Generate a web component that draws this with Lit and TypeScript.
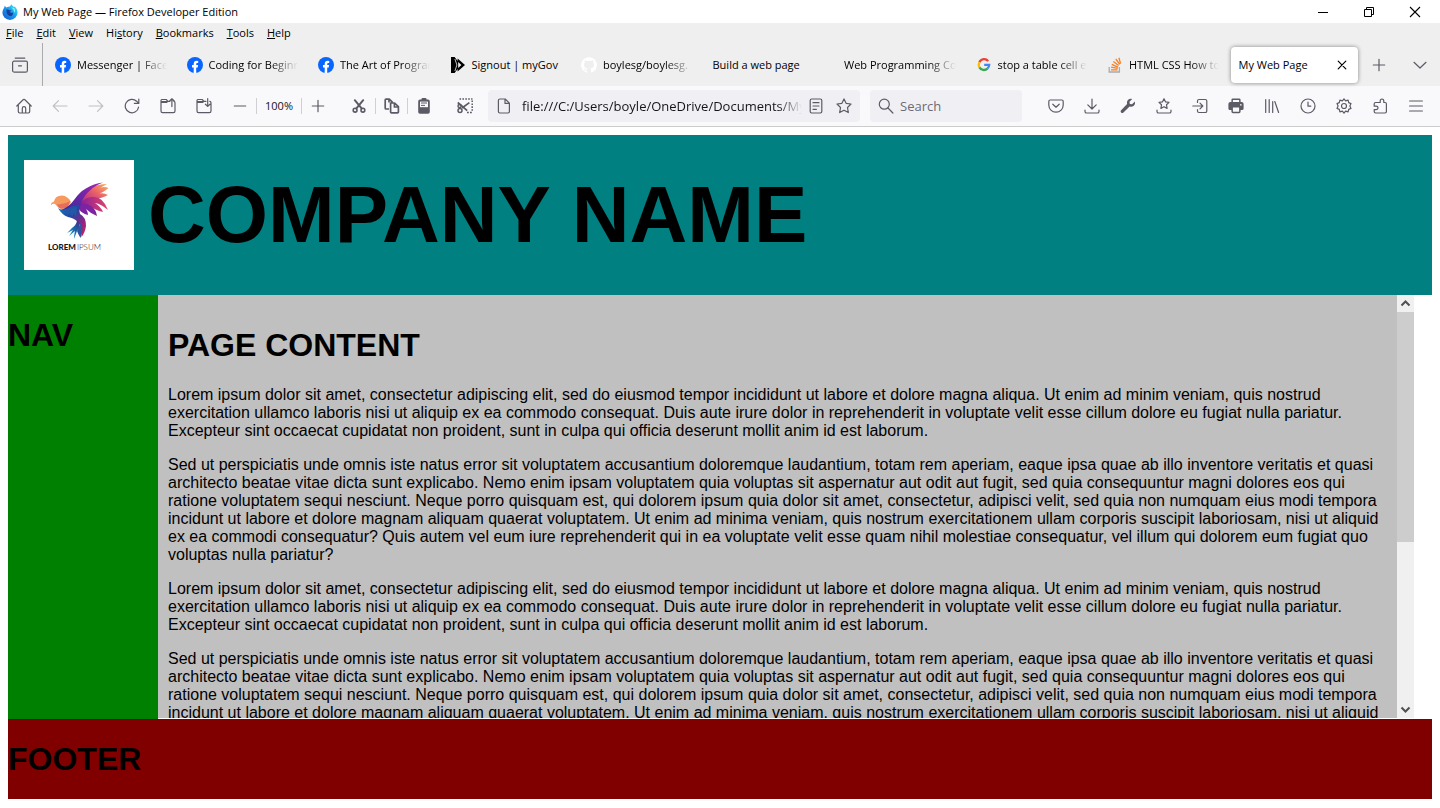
import { LitElement, html, css, svg, TemplateResult } from "lit";
import { customElement, state } from "lit/decorators.js";
import { classMap } from "lit/directives/class-map.js";

type Glyph = ReturnType<typeof svg>;

const stroked = (d: string, extra?: Glyph) =>
  html`<svg class="icon" viewBox="0 0 16 16" fill="none" stroke="currentColor" stroke-width="1.2" stroke-linecap="round" stroke-linejoin="round" aria-hidden="true"><path d=${d}></path>${extra}</svg>`;

const SPIKES =
  "M8 .9L9.6 2.9L12.1 2.1L12.7 4.6L15 5.6L13.9 8L15 10.4L12.7 11.4L12.1 13.9L9.6 13.1L8 15.1L6.4 13.1L3.9 13.9L3.3 11.4L1 10.4L2.1 8L1 5.6L3.3 4.6L3.9 2.1L6.4 2.9z";

const icons: Record<string, TemplateResult> = {
  view: stroked("M3.2 1.1H12.8M2 4.2H14A1.4 1.4 0 0 1 15.4 5.6V13.4A1.8 1.8 0 0 1 13.6 15.2H2.4A1.8 1.8 0 0 1 .6 13.4V5.6A1.4 1.4 0 0 1 2 4.2zM6.5 8.8H9.5"),
  home: stroked("M.8 8L7.4 1.5Q8 1 8.6 1.5L15.2 8M2.3 7V13.6Q2.3 15 3.7 15H12.3Q13.7 15 13.7 13.6V7M6.3 15V10.2Q6.3 8.6 8 8.6Q9.7 8.6 9.7 10.2V15"),
  back: stroked("M15 8H1.2M6.5 2.7L1.2 8L6.5 13.3"),
  forward: stroked("M1 8H14.8M9.5 2.7L14.8 8L9.5 13.3"),
  reload: stroked("M14.6 9A6.7 6.7 0 1 1 12.6 3.2L14.6 5.2M14.8 1V5.4H10.4"),
  open: stroked("M10 3.3H8L6.2 1.5H1.8Q1 1.5 1 2.5V13Q1 14.6 2.6 14.6H13.4Q15 14.6 15 13V5Q15 3.3 13.8 3.3M1 4.4H7M1 3.6H7M11.9 8.6V.8M9.6 3L11.9 .8L14.2 3"),
  save: stroked("M10 3.3H8L6.2 1.5H1.8Q1 1.5 1 2.5V13Q1 14.6 2.6 14.6H13.4Q15 14.6 15 13V5Q15 3.3 13.8 3.3M1 4.4H7M1 3.6H7M11.7 .6V8.4M9.4 6.2L11.7 8.4L14 6.2"),
  minus: stroked("M2.3 8H13.7"),
  plus: stroked("M2.3 8H13.7M8 2.3V13.7"),
  cut: html`<svg class="icon" viewBox="0 0 16 16" fill="none" stroke="currentColor" stroke-width="1.6" stroke-linecap="round" aria-hidden="true"><circle cx="4.1" cy="12.2" r="1.9"></circle><circle cx="11.9" cy="12.2" r="1.9"></circle><path d="M5.2 10.6L12.2 2.2M10.8 10.6L3.8 2.2" stroke-width="2"></path></svg>`,
  copy: html`<svg class="icon" viewBox="0 0 16 16" fill="none" stroke="currentColor" stroke-width="1.7" stroke-linejoin="round" aria-hidden="true"><path d="M5 11H2Q1.2 11 1.2 10V2Q1.2 1.2 2 1.2H5.3L8.6 4.4M5 1.2V4.6M6.6 5H10.6L14.4 8.7V14Q14.4 14.9 13.5 14.9H7.5Q6.6 14.9 6.6 14zM10.4 5V9H14.4"></path></svg>`,
  paste: html`<svg class="icon" viewBox="0 0 16 16" aria-hidden="true"><path d="M4 1.6H5.5V1Q5.5 0 6.5 0H9.5Q10.5 0 10.5 1V1.6H12Q13.8 1.6 13.8 3.4V14Q13.8 15.8 12 15.8H4Q2.2 15.8 2.2 14V3.4Q2.2 1.6 4 1.6z" fill="currentColor"></path><path d="M4 3.6H12V9.2H4z" fill="#f9f9fb"></path><path d="M5 5H11M5 7.4H9" stroke="currentColor"></path></svg>`,
  screenshot: html`<svg class="icon" viewBox="0 0 16 16" fill="none" stroke="currentColor" stroke-width="1.5" aria-hidden="true"><path d="M2.5 1H15.5M15.2 2.5V14" stroke-dasharray="1.6 1.3"></path><path d="M.8 4.5L10.2 12.6M5 10L12.4 4.6" stroke-width="1.7"></path><circle cx="3" cy="12.6" r="2"></circle><circle cx="2.6" cy="8" r="1.6"></circle><path d="M10 14.6H15.5" stroke-dasharray="1.8 1.2"></path></svg>`,
  page: stroked("M3.8 1H9.2L13.4 5.2V13.6Q13.4 15 12 15H3.8Q2.4 15 2.4 13.6V2.4Q2.4 1 3.8 1zM9 1V5.4H13.4"),
  reader: stroked("M3.6 1H12.4Q13.8 1 13.8 2.4V13.6Q13.8 15 12.4 15H3.6Q2.2 15 2.2 13.6V2.4Q2.2 1 3.6 1zM5 4.7H11M5 8H11M5 11.3H8.4"),
  star: stroked("M8 .9L10.1 5.3L15 6L11.5 9.5L12.3 14.6L8 12.2L3.7 14.6L4.5 9.5L1 6L5.9 5.3z"),
  search: stroked("M10 10L14.9 15", svg`<circle cx="6.3" cy="6.2" r="5"></circle>`),
  pocket: stroked("M2.2 2H13.8Q15.2 2 15.2 3.4V7A7.2 7.2 0 0 1 .8 7V3.4Q.8 2 2.2 2zM4.8 6.2L8 9.2L11.2 6.2"),
  download: stroked("M8 1V10.8M3.8 6.8L8 11L12.2 6.8M1 12V13.4Q1 15 2.6 15H13.4Q15 15 15 13.4V12"),
  wrench: html`<svg class="icon" viewBox="0 0 16 16" aria-hidden="true"><path d="M14.9 3.6L12 6.3L9.8 5.9L9.5 3.8L12.2 1Q9.7 .3 7.9 2.1Q6.4 3.8 7.1 6.1L.9 12.5Q.2 13.6 1.1 14.6Q2.2 15.5 3.2 14.8L9.6 8.6Q12 9.3 13.8 7.7Q15.6 6 14.9 3.6z" fill="currentColor"></path></svg>`,
  bookmarks: stroked("M8 .7L9.6 3.9L13 4.4L10.5 6.8L11.1 10.4L8 8.7L4.9 10.4L5.5 6.8L3 4.4L6.4 3.9zM1 12V13.4Q1 15 2.6 15H13.4Q15 15 15 13.4V12"),
  signin: stroked("M5.5 4.4V3Q5.5 1.5 7 1.5H13.2Q14.8 1.5 14.8 3.1V12.9Q14.8 14.5 13.2 14.5H7Q5.5 14.5 5.5 13V11.6M.8 8H10.6M8 5.2L10.8 8L8 10.8"),
  print: html`<svg class="icon" viewBox="0 0 16 16" aria-hidden="true"><path d="M3.4 4V2Q3.4 .6 4.8 .6H11.2Q12.6 .6 12.6 2V4H13.6Q15.6 4 15.6 6V10.4Q15.6 12 14 12H12.6V13.6Q12.6 15.2 11 15.2H5Q3.4 15.2 3.4 13.6V12H2Q.4 12 .4 10.4V6Q.4 4 2.4 4z" fill="currentColor"></path><path d="M4.9 2H11.1V4H4.9zM4.9 9.6H11.1V13.8H4.9zM12 6.2H13.6V7.4H12z" fill="#f9f9fb"></path></svg>`,
  library: stroked("M1.7 1.5V14.5M5.2 1.5V14.5M8.7 3.5V14.5M10.8 3.5L14.6 14.5"),
  history: stroked("M8 4V8.2H10.8", svg`<circle cx="8" cy="8" r="7"></circle>`),
  settings: stroked(SPIKES, svg`<circle cx="8" cy="8" r="2.5"></circle>`),
  extensions: stroked("M5 4.5H8.2V3.2Q8.2 1 10 1Q11.8 1 11.8 3.2V4.5H13Q14.4 4.5 14.4 5.9V13.6Q14.4 15 13 15H3.6Q2.2 15 2.2 13.6V11.6H4Q6 11.6 6 9.8Q6 8.2 4 8.2H2.2V6Q2.2 4.5 3.6 4.5H5"),
  menu: stroked("M1.6 3H14.4M1.6 8H14.4M1.6 13H14.4"),
  chevron: stroked("M2 5.3L8 11L14 5.3"),
  close: stroked("M4.2 4.2L11.8 11.8M11.8 4.2L4.2 11.8"),
  minimize: html`<svg class="icon" viewBox="0 0 16 16" fill="none" stroke="currentColor" aria-hidden="true"><path d="M3 8.5H13"></path></svg>`,
  restore: html`<svg class="icon" viewBox="0 0 16 16" fill="none" stroke="currentColor" aria-hidden="true"><path d="M3.5 5.5H10.5V12.5H3.5zM5.5 5.5V3.5H12.5V10.5H10.5"></path></svg>`,
  quit: html`<svg class="icon" viewBox="0 0 16 16" fill="none" stroke="currentColor" stroke-width="1.1" aria-hidden="true"><path d="M3 3L13 13M13 3L3 13"></path></svg>`,
};

const favicons: Record<string, TemplateResult> = {
  firefox: html`<svg class="icon" viewBox="0 0 16 16" aria-hidden="true">
    <defs><linearGradient id="fx" x1="1" y1="0" x2="0" y2="1"><stop offset="0" stop-color="#4df0f5"></stop><stop offset=".45" stop-color="#1c9df0"></stop><stop offset="1" stop-color="#1550c8"></stop></linearGradient></defs>
    <path d="M2 4L2.8 1.8L4.2 3.4Q6 2.4 8 2.4L9.3 .3Q10.2 2 12 3L12.8 2.6Q15.6 5 15.6 8.6A7.6 7.3 0 0 1 .4 8.6Q.4 6 2 4z" fill="url(#fx)"></path>
    <path d="M4.4 5.6Q6 5 7.5 6.2L9.6 6.4Q9 7.6 7.4 7.6Q8.4 9.6 11.2 8.4Q11 12 7.9 12Q4.2 11.6 4.4 5.6z" fill="#1b3f96"></path>
    <path d="M9 3.5Q12.6 5.4 12 9Q14 6.5 12.4 4z" fill="#7af7f5"></path></svg>`,
  facebook: html`<svg class="icon" viewBox="0 0 16 16" aria-hidden="true"><circle cx="8" cy="8" r="8" fill="#0866ff"></circle><path d="M6.7 15.9V10.5H5V8H6.7V6.9Q6.7 3.7 9.8 3.7Q10.7 3.7 11.2 3.9V6.1H10.2Q9.2 6.1 9.2 7.1V8H11.1L10.7 10.5H9.2V15.9z" fill="#fff"></path></svg>`,
  mygov: html`<svg class="icon" viewBox="0 0 16 16" aria-hidden="true"><path d="M1 0H4.6L7.6 4V1.4L15 8L7.6 14.6V12L4.6 16H1z" fill="#000"></path><path d="M4.9 2L6.9 8L4.9 14" fill="none" stroke="#efefef" stroke-width=".8"></path><path d="M8.2 5L11.4 8L8.2 11z" fill="#efefef"></path></svg>`,
  github: html`<svg class="icon" viewBox="0 0 16 16" aria-hidden="true"><path d="M8 .2A7.9 7.9 0 0 0 5.5 15.6C5.9 15.7 6 15.4 6 15.2V13.7C3.8 14.2 3.3 12.8 3.3 12.8C2.9 11.8 2.4 11.6 2.4 11.6C1.7 11.1 2.5 11.1 2.5 11.1C3.3 11.2 3.7 11.9 3.7 11.9C4.4 13.1 5.6 12.8 6 12.6C6.1 12 6.3 11.7 6.6 11.5C4.8 11.3 3 10.6 3 7.6C3 6.7 3.3 6 3.8 5.5C3.7 5.3 3.4 4.4 3.9 3.3C3.9 3.3 4.6 3.1 6 4.1Q8 3.6 10 4.1C11.5 3.1 12.1 3.3 12.1 3.3C12.6 4.4 12.3 5.3 12.2 5.5C12.7 6 13 6.7 13 7.6C13 10.6 11.2 11.3 9.4 11.5C9.7 11.7 10 12.2 10 13V15.2C10 15.4 10.1 15.7 10.5 15.6A7.9 7.9 0 0 0 8 .2z" fill="#fff"></path></svg>`,
  google: html`<svg class="icon" viewBox="0 0 16 16" fill="none" stroke-width="2.3" aria-hidden="true"><path d="M12.2 4.1A5.2 5.2 0 0 0 3.4 5.2" stroke="#ea4335"></path><path d="M3.4 5.2A5.4 5.4 0 0 0 3.4 10.4" stroke="#fbbc05"></path><path d="M3.4 10.4A5.2 5.2 0 0 0 11.4 11.6" stroke="#34a853"></path><path d="M11.4 11.6Q13.1 10.2 13.2 7.8H8.2" stroke="#4285f4"></path></svg>`,
  stack: html`<svg class="icon" viewBox="0 0 16 16" fill="none" aria-hidden="true"><path d="M2.2 10V15H12.4V10" stroke="#a9abad" stroke-width="1.3"></path><path d="M4 12.8H10.6M4.1 10.2L10.7 11.4M4.8 7.3L11 10.1M6.3 4.4L11.7 8.5M8.8 2L12.8 7.3M11.9 .8L13.6 6.6" stroke="#f48024" stroke-width="1.3"></path></svg>`,
};

interface Tab {
  label: string;
  favicon?: string;
  fits?: boolean;
}

const TABS: Tab[] = [
  { label: "Messenger | Facebook", favicon: "facebook" },
  { label: "Coding for Beginners", favicon: "facebook" },
  { label: "The Art of Programming", favicon: "facebook" },
  { label: "Signout | myGov", favicon: "mygov", fits: true },
  { label: "boylesg/boylesg.", favicon: "github" },
  { label: "Build a web page", fits: true },
  { label: "Web Programming Course" },
  { label: "stop a table cell expanding", favicon: "google" },
  { label: "HTML CSS How to", favicon: "stack" },
  { label: "My Web Page", fits: true },
];

const MENUS: [string, string, string][] = [
  ["", "F", "ile"],
  ["", "E", "dit"],
  ["", "V", "iew"],
  ["Hi", "s", "tory"],
  ["", "B", "ookmarks"],
  ["", "T", "ools"],
  ["", "H", "elp"],
];

const ACTIONS: [string, string][] = [
  ["pocket", "Save to Pocket"],
  ["download", "Downloads"],
  ["wrench", "Developer tools"],
  ["bookmarks", "Bookmarks menu"],
  ["signin", "Sign in"],
  ["print", "Print"],
  ["library", "Library"],
  ["history", "History"],
  ["settings", "Settings"],
  ["extensions", "Extensions"],
  ["menu", "Open application menu"],
];

const LOREM =
  "Lorem ipsum dolor sit amet, consectetur adipiscing elit, sed do eiusmod tempor incididunt ut labore et dolore magna aliqua. Ut enim ad minim veniam, quis nostrud exercitation ullamco laboris nisi ut aliquip ex ea commodo consequat. Duis aute irure dolor in reprehenderit in voluptate velit esse cillum dolore eu fugiat nulla pariatur. Excepteur sint occaecat cupidatat non proident, sunt in culpa qui officia deserunt mollit anim id est laborum.";
const SED =
  "Sed ut perspiciatis unde omnis iste natus error sit voluptatem accusantium doloremque laudantium, totam rem aperiam, eaque ipsa quae ab illo inventore veritatis et quasi architecto beatae vitae dicta sunt explicabo. Nemo enim ipsam voluptatem quia voluptas sit aspernatur aut odit aut fugit, sed quia consequuntur magni dolores eos qui ratione voluptatem sequi nesciunt. Neque porro quisquam est, qui dolorem ipsum quia dolor sit amet, consectetur, adipisci velit, sed quia non numquam eius modi tempora incidunt ut labore et dolore magnam aliquam quaerat voluptatem. Ut enim ad minima veniam, quis nostrum exercitationem ullam corporis suscipit laboriosam, nisi ut aliquid ex ea commodi consequatur? Quis autem vel eum iure reprehenderit qui in ea voluptate velit esse quam nihil molestiae consequatur, vel illum qui dolorem eum fugiat quo voluptas nulla pariatur?";

const base = css`
  *,
  *::before {
    box-sizing: border-box;
  }
  button,
  input {
    margin: 0;
    padding: 0;
    border: 0;
    background: none;
    color: inherit;
    font: inherit;
    outline: none;
  }
  .icon {
    width: 16px;
    height: 16px;
    flex: none;
    display: block;
  }
`;

@customElement("browser-chrome")
export class BrowserChrome extends LitElement {
  @state() private active = TABS.length - 1;

  static styles = [
    base,
    css`
      :host {
        display: block;
        font: 11px/16px "Segoe UI", "Open Sans", sans-serif;
        color: #000;
      }
      .title-bar {
        display: flex;
        align-items: center;
        gap: 5px;
        height: 23px;
        padding: 0 2px;
        background: #fff;
      }
      .title {
        flex: 1;
      }
      .window-buttons {
        display: flex;
      }
      .window-buttons button {
        display: grid;
        place-items: center;
        width: 46px;
        height: 20px;
      }
      .menu-bar {
        display: flex;
        gap: 1px;
        height: 20px;
        background: #efefef;
      }
      .menu-bar button {
        padding: 0 6px;
      }
      .tab-bar {
        display: flex;
        align-items: center;
        height: 43px;
        background: #efefef;
      }
      .firefox-view {
        display: grid;
        place-items: center;
        align-self: stretch;
        width: 43px;
        padding-right: 3px;
        border-right: 1px solid #aaaaae;
        color: #5b5b66;
      }
      .tabs {
        flex: 1;
        min-width: 0;
        display: grid;
        grid-template-columns: repeat(10, minmax(0, 1fr));
        gap: 4px;
        padding-left: 4px;
      }
      .tab {
        display: flex;
        align-items: center;
        gap: 6px;
        height: 36px;
        padding: 0 8px;
        border-radius: 4px;
        text-align: left;
      }
      .tab.active {
        background: #fff;
        box-shadow: 0 0 4px rgba(0, 0, 0, 0.45);
      }
      .label {
        flex: 1;
        overflow: hidden;
        white-space: nowrap;
        mask-image: linear-gradient(to left, transparent, #000 28px);
      }
      .fits .label {
        mask-image: none;
      }
      .tab-tool {
        display: grid;
        place-items: center;
        width: 41px;
        height: 36px;
        color: #5b5b66;
      }
      .tool-bar {
        display: flex;
        align-items: center;
        height: 41px;
        padding: 0 6px;
        background: #f9f9fb;
        border-bottom: 1px solid #cccccc;
        color: #5b5b66;
      }
      .tool {
        display: grid;
        place-items: center;
        flex: none;
        width: 36px;
        height: 32px;
      }
      .tool:disabled {
        color: #c0c0c5;
      }
      .group {
        display: flex;
        align-items: center;
        flex: none;
      }
      .group .segment {
        display: grid;
        place-items: center;
        width: 32px;
        height: 16px;
      }
      .group .segment + .segment {
        border-left: 1px solid #cfcfd4;
      }
      .group .level {
        width: 45px;
        color: #15141a;
      }
      .zoom {
        margin-left: 2px;
      }
      .edit {
        margin: 0 8px 0 10px;
      }
      .field {
        display: flex;
        align-items: center;
        gap: 10px;
        height: 32px;
        padding: 0 8px;
        border-radius: 4px;
        background: #f0f0f4;
        font-size: 13px;
      }
      .field input {
        flex: 1;
        min-width: 0;
        height: 24px;
      }
      .address {
        flex: 1;
        min-width: 0;
        margin-left: 5px;
      }
      .address input {
        color: #15141a;
        mask-image: linear-gradient(to left, transparent, #000 24px);
      }
      .page-tools {
        display: flex;
        gap: 12px;
        margin-left: -4px;
      }
      .search {
        flex: none;
        width: 152px;
        gap: 6px;
        margin: 0 16px 0 10px;
      }
      .search input::placeholder {
        color: #6b6b74;
        opacity: 1;
      }
    `,
  ];

  private tool(name: string, label: string, disabled = false) {
    return html`<button class="tool" aria-label=${label} ?disabled=${disabled}>${icons[name]}</button>`;
  }

  render() {
    return html`
      <div class="title-bar">
        ${favicons.firefox}
        <span class="title">My Web Page — Firefox Developer Edition</span>
        <div class="window-buttons">
          <button aria-label="Minimize">${icons.minimize}</button>
          <button aria-label="Restore">${icons.restore}</button>
          <button aria-label="Close">${icons.quit}</button>
        </div>
      </div>
      <div class="menu-bar">
        ${MENUS.map(([before, key, after]) => html`<button>${before}<u>${key}</u>${after}</button>`)}
      </div>
      <div class="tab-bar">
        <button class="firefox-view" aria-label="Firefox View">${icons.view}</button>
        <div class="tabs" role="tablist">
          ${TABS.map(
            (tab, i) => html`<button
              class=${classMap({ tab: true, fits: !!tab.fits, active: i === this.active })}
              role="tab"
              aria-selected=${i === this.active}
              @click=${() => (this.active = i)}
            >
              ${tab.favicon ? favicons[tab.favicon] : null}<span class="label">${tab.label}</span>${i === this.active ? icons.close : null}
            </button>`,
          )}
        </div>
        <button class="tab-tool" aria-label="New tab">${icons.plus}</button>
        <button class="tab-tool" aria-label="List all tabs">${icons.chevron}</button>
      </div>
      <div class="tool-bar">
        ${this.tool("home", "Home")} ${this.tool("back", "Back", true)} ${this.tool("forward", "Forward", true)}
        ${this.tool("reload", "Reload")} ${this.tool("open", "Open file")} ${this.tool("save", "Save page")}
        <div class="group zoom">
          <button class="segment" aria-label="Zoom out">${icons.minus}</button>
          <button class="segment level">100%</button>
          <button class="segment" aria-label="Zoom in">${icons.plus}</button>
        </div>
        <div class="group edit">
          <button class="segment" aria-label="Cut">${icons.cut}</button>
          <button class="segment" aria-label="Copy">${icons.copy}</button>
          <button class="segment" aria-label="Paste">${icons.paste}</button>
        </div>
        ${this.tool("screenshot", "Take screenshot")}
        <div class="field address">
          ${icons.page}
          <input type="text" aria-label="Address" .value=${"file:///C:/Users/boyle/OneDrive/Documents/MyWebPage"} />
          <div class="page-tools">
            <button aria-label="Reader view">${icons.reader}</button>
            <button aria-label="Bookmark this page">${icons.star}</button>
          </div>
        </div>
        <div class="field search">
          ${icons.search}
          <input type="text" aria-label="Search" placeholder="Search" />
        </div>
        ${ACTIONS.map(([name, label]) => this.tool(name, label))}
      </div>
    `;
  }
}

@customElement("company-logo")
export class CompanyLogo extends LitElement {
  static styles = css`
    :host {
      display: block;
      width: 110px;
      height: 110px;
      background: #fff;
    }
    svg {
      display: block;
      width: 100%;
      height: 100%;
    }
    .name {
      font: 8px Lato, sans-serif;
      fill: #1c1420;
    }
    .bold {
      font-weight: 900;
    }
    .light {
      font-weight: 300;
    }
  `;

  render() {
    return html`<svg viewBox="0 0 110 110" role="img" aria-label="Lorem Ipsum">
      <defs>
        <linearGradient id="wing" x1="0" y1="1" x2="1" y2="0"><stop offset="0" stop-color="#2b2f9c"></stop><stop offset=".5" stop-color="#6a25a5"></stop><stop offset="1" stop-color="#a326b4"></stop></linearGradient>
        <linearGradient id="upper" x1="0" y1="1" x2="1" y2="0"><stop offset="0" stop-color="#a8208f"></stop><stop offset=".55" stop-color="#e8606a"></stop><stop offset="1" stop-color="#ffb35c"></stop></linearGradient>
        <linearGradient id="middle" x1="0" y1="0" x2="1" y2="0"><stop offset="0" stop-color="#8a1f96"></stop><stop offset="1" stop-color="#e2436c"></stop></linearGradient>
        <linearGradient id="body" x1="0" y1="0" x2="1" y2="1"><stop offset="0" stop-color="#1878b8"></stop><stop offset=".4" stop-color="#23469e"></stop><stop offset=".75" stop-color="#a01f80"></stop><stop offset="1" stop-color="#e0234e"></stop></linearGradient>
        <linearGradient id="tail" x1="0" y1="1" x2="1" y2="0"><stop offset="0" stop-color="#1ca7e0"></stop><stop offset=".6" stop-color="#1b5fa8"></stop><stop offset="1" stop-color="#5b1f7e"></stop></linearGradient>
      </defs>
      <path d="M27 45.500Q26.500 42.500 30 41.500Q31 35.500 38 35.500Q44 36 47 42Q44 48 37 49Q33 47 31 44Q28 43 27 45.500z" fill="#f79a5e"></path>
      <path d="M33 44Q40 45 46 41L44 47Q39 50 35 48z" fill="#e8705b"></path>
      <path d="M58 45Q57 34 66 28Q74 24 83 24L76 28Q80 26 84.500 28Q79 33 72 34.500Q79 32 84 35Q77 39 68 39z" fill="url(#upper)"></path>
      <path d="M56 44Q62 36 70 37Q79 37 84 50Q77 44 71 43Q77 47 79 52Q71 50 66 46z" fill="url(#middle)"></path>
      <path d="M55 44Q62 42 68 46.500Q72 50 73 56Q66 53 62 49Q64 52 64 55Q57 53 55 49z" fill="#7b23a0"></path>
      <path d="M37 50Q45 47 50 40Q60 25 79 22.500Q70 26 66.500 30Q59 36 57.500 44Q54 51 44 54z" fill="url(#wing)"></path>
      <path d="M34 48Q38 51.500 45 48Q52 44 56 46Q55 51 56 54Q62 57 62 66Q61 73 57.500 77Q58 68 54 62Q50 58 44 57Q38 55 34 48z" fill="url(#body)"></path>
      <path d="M41 51Q48 47 53 47L52 58L50 53L48 57L46 53L43 55z" fill="#2557a8"></path>
      <path d="M53 59Q58 65 53 71L50 79Q50 75 51 71L45 76L49 70L43 73L48 68Q53 65 53 59z" fill="url(#tail)"></path>
      <path d="M57 62Q60 70 56.500 78Q54 74 53 71z" fill="#30549f"></path>
      <text class="name" x="24" y="90"><tspan class="bold">LOREM</tspan><tspan class="light" dx="1">IPSUM</tspan></text>
    </svg>`;
  }
}

@customElement("web-page")
export class WebPage extends LitElement {
  static styles = [
    base,
    css`
      :host {
        display: flex;
        flex-direction: column;
        min-height: 0;
        padding: 8px 8px 9px;
        background: #fff;
        color: #000;
        font: 16px/18px Arial, "Liberation Sans", sans-serif;
      }
      h1 {
        margin: 0;
        font-size: 32px;
        line-height: 37px;
      }
      .banner {
        display: flex;
        align-items: center;
        gap: 14px;
        height: 160px;
        padding: 0 16px;
        background: #008080;
      }
      .banner h1 {
        font-size: 80px;
        line-height: 92px;
      }
      .middle {
        flex: 1;
        min-height: 0;
        display: flex;
        padding-right: 18px;
      }
      .nav {
        width: 150px;
        padding-top: 22px;
        background: #008000;
      }
      .content {
        flex: 1;
        overflow: hidden;
        margin-bottom: 1px;
        padding: 32px 10px 10px;
        background: #c0c0c0;
      }
      .content h1 {
        margin-bottom: 22px;
      }
      .content p {
        margin: 0 0 16px;
      }
      .scrollbar {
        display: flex;
        flex-direction: column;
        width: 17px;
        margin-bottom: 1px;
        background: #f0f0f0;
        color: #505050;
      }
      .scrollbar button {
        display: grid;
        place-items: center;
        height: 17px;
      }
      .arrow {
        width: 11px;
        height: 11px;
      }
      .track {
        flex: 1;
      }
      .thumb {
        height: 59%;
        background: #cdcdcd;
      }
      .footer {
        height: 80px;
        padding-top: 22px;
        background: #800000;
      }
    `,
  ];

  private arrow(d: string) {
    return html`<svg class="arrow" viewBox="0 0 11 11" fill="none" stroke="currentColor" stroke-width="2" aria-hidden="true"><path d=${d}></path></svg>`;
  }

  render() {
    return html`
      <header class="banner">
        <company-logo></company-logo>
        <h1>COMPANY NAME</h1>
      </header>
      <div class="middle">
        <nav class="nav"><h1>NAV</h1></nav>
        <main class="content">
          <h1>PAGE CONTENT</h1>
          ${[LOREM, SED, LOREM, SED].map((text) => html`<p>${text}</p>`)}
        </main>
        <div class="scrollbar">
          <button aria-label="Scroll up">${this.arrow("M1.500 7.500L5.500 3.500L9.500 7.500")}</button>
          <div class="track"><div class="thumb"></div></div>
          <button aria-label="Scroll down">${this.arrow("M1.500 3.500L5.500 7.500L9.500 3.500")}</button>
        </div>
      </div>
      <footer class="footer"><h1>FOOTER</h1></footer>
    `;
  }
}

@customElement("app-root")
export class AppRoot extends LitElement {
  static styles = css`
    :host {
      display: flex;
      flex-direction: column;
      height: 100vh;
      overflow: hidden;
    }
    web-page {
      flex: 1;
    }
  `;

  render() {
    return html`<browser-chrome></browser-chrome><web-page></web-page>`;
  }
}
